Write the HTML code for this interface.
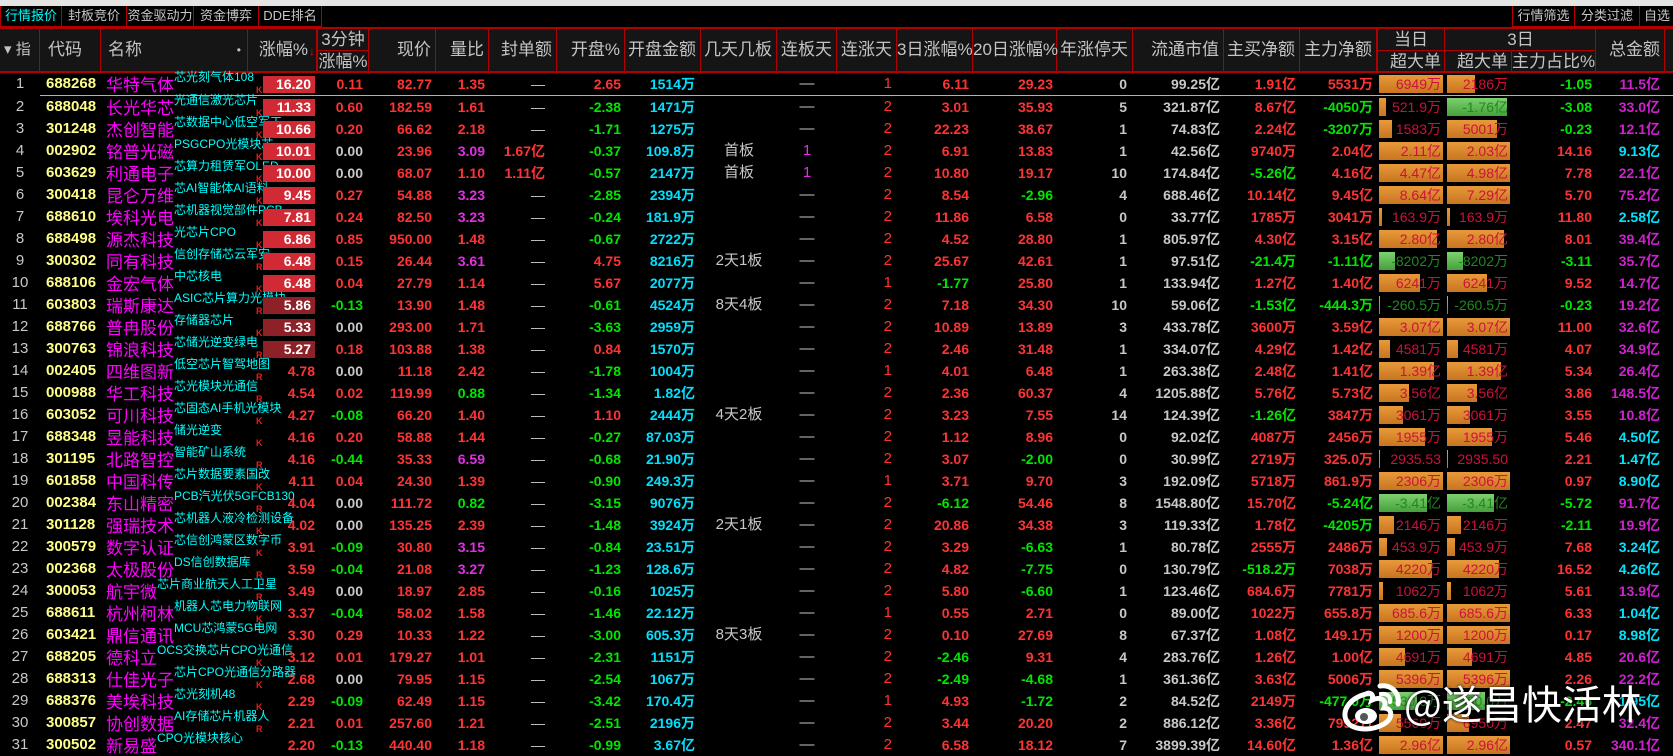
<!DOCTYPE html>
<html><head><meta charset="utf-8">
<style>
*{box-sizing:border-box}
body{margin:0;background:#000;width:1673px;height:744px;overflow:hidden;position:relative;font-family:"Liberation Sans","Noto Sans CJK SC",sans-serif}
.top{position:absolute;left:0;top:0;width:1673px;height:6px;background:#e4e4e4}
.tab{position:absolute;top:6px;height:21px;border:1px solid #b00000;border-top:none;color:#c8c8c8;font-size:13px;line-height:20px;text-align:center;background:#000;white-space:nowrap;overflow:hidden}
.hd{position:absolute;top:27px;left:0;width:1673px;height:46px;background:#151515;border-top:2px solid #b00000;border-bottom:2px solid #b00000}
.hc{position:absolute;top:0;height:42px;border-right:1px solid #b00000;color:#c4c4c4;font-size:17px;line-height:42px;text-align:right;padding-right:4px;white-space:nowrap}
.hs{position:absolute;height:21px;line-height:21px;color:#c4c4c4;font-size:17px;text-align:center;white-space:nowrap}
.hl{position:absolute;height:1px;background:#b00000}
.hv{position:absolute;width:1px;background:#b00000}
table{position:absolute;top:73px;left:0;border-collapse:collapse;table-layout:fixed;width:1673px}
td{height:22px;padding:0 4px 0 0;text-align:right;font-size:14px;font-weight:bold;white-space:nowrap;overflow:visible;color:#c8c8c8;position:relative;line-height:22px}
td:nth-child(1){text-align:center;padding:0;font-weight:normal;font-size:15px}
td:nth-child(2){text-align:left;padding-left:6px;color:#ffff88;font-size:15px}
td:nth-child(3){text-align:left;padding-left:5px;font-weight:normal}
td:nth-child(4){padding:0 2px 0 15px}
td:nth-child(5){padding-right:6px}
td:nth-child(8){padding-right:12px;font-weight:normal}
td:nth-child(10){padding-right:6px;color:#00e0ff}
td:nth-child(11),td:nth-child(12){text-align:center;padding:0;font-weight:normal;font-size:15px}
td:nth-child(13){padding-right:5px;color:#ff3333;font-weight:normal;font-size:15px}
td:nth-child(16){padding-right:6px}
td:nth-child(20),td:nth-child(21){padding:0 2px;font-weight:normal}
td:nth-child(23){padding-right:5px}
.n{color:#ff00ff;font-size:17px;position:relative;top:2px}
.cp{color:#00ffff;font-size:12px;position:absolute;top:-3px;line-height:14px;font-weight:normal}
.k{position:absolute;left:8px;bottom:0;font-size:9px;color:#e02020;font-style:normal;line-height:10px;font-weight:bold}
.zf{background:#d22a34;color:#fff;height:17px;line-height:17px;margin-top:0;padding-right:4px}
.zd{background:#8e2028}
.r{color:#ff3333}.g{color:#00e600}.w{color:#c8c8c8}.c{color:#00e5ff}.m{color:#d020d0}.p{color:#e030e0}
.bw{position:relative;height:18px;line-height:18px;color:#d0103c;font-size:14px;padding-right:2px}
.bw b{position:absolute;left:0;top:0;height:18px;background:linear-gradient(#e89a3a,#c87520);font-weight:normal}
.bw b.gb{background:linear-gradient(#7ed070,#45a03a)}
.bw span{position:relative}
.bw.gt{color:#1e8a1e}
.y td{border-bottom:1px solid #c8c800}
.y td:first-child{border-bottom:none}
.wm{position:absolute;left:1404px;top:676px;color:#fff;font-size:40px;font-family:"Noto Sans CJK SC",sans-serif;line-height:52px;text-shadow:0 0 3px #000}
</style></head><body>
<div class="top"></div>
<div class="tab" style="left:0;width:62px;color:#00ffff">行情报价</div>
<div class="tab" style="left:61px;width:66px">封板竞价</div>
<div class="tab" style="left:126px;width:68px">资金驱动力</div>
<div class="tab" style="left:193px;width:66px">资金博弈</div>
<div class="tab" style="left:258px;width:64px">DDE排名</div>
<div class="tab" style="left:1512px;width:63px">行情筛选</div>
<div class="tab" style="left:1574px;width:66px">分类过滤</div>
<div class="tab" style="left:1639px;width:40px;text-align:left;padding-left:4px">自选</div>
<div class="hd">
<div class="hc" style="left:0;width:40px;text-align:left;padding-left:4px;font-size:15px">▾ 指</div>
<div class="hc" style="left:40px;width:61px;text-align:left;padding-left:8px">代码</div>
<div class="hc" style="left:101px;width:147px;text-align:left;padding-left:7px">名称<span style="position:absolute;right:6px;font-size:12px">•</span></div>
<div class="hc" style="left:248px;width:69px;padding-right:8px">涨幅%<span style="position:absolute;right:1px;top:1px;color:#f00;font-size:12px">↓</span></div>
<div class="hs" style="left:317px;top:0;width:52px">3分钟</div>
<div class="hl" style="left:317px;top:21px;width:52px"></div>
<div class="hs" style="left:317px;top:22px;width:52px">涨幅%</div>
<div class="hv" style="left:317px;top:0;height:42px"></div>
<div class="hv" style="left:368px;top:0;height:42px"></div>
<div class="hc" style="left:369px;width:67px">现价</div>
<div class="hc" style="left:436px;width:53px">量比</div>
<div class="hc" style="left:489px;width:68px">封单额</div>
<div class="hc" style="left:557px;width:68px">开盘%</div>
<div class="hc" style="left:625px;width:76px">开盘金额</div>
<div class="hc" style="left:701px;width:76px">几天几板</div>
<div class="hc" style="left:777px;width:60px">连板天</div>
<div class="hc" style="left:837px;width:60px">连涨天</div>
<div class="hc" style="left:897px;width:76px">3日涨幅%</div>
<div class="hc" style="left:973px;width:84px">20日涨幅%</div>
<div class="hc" style="left:1057px;width:76px">年涨停天</div>
<div class="hc" style="left:1133px;width:91px">流通市值</div>
<div class="hc" style="left:1224px;width:76px">主买净额</div>
<div class="hc" style="left:1300px;width:77px">主力净额</div>
<div class="hs" style="left:1377px;top:0;width:68px">当日</div>
<div class="hs" style="left:1377px;top:22px;width:68px;text-align:right;padding-right:4px">超大单</div>
<div class="hs" style="left:1445px;top:0;width:151px">3日</div>
<div class="hs" style="left:1445px;top:22px;width:67px;text-align:right;padding-right:4px">超大单</div>
<div class="hs" style="left:1512px;top:22px;width:84px;text-align:right;padding-right:4px">主力占比%</div>
<div class="hl" style="left:1377px;top:21px;width:219px"></div>
<div class="hv" style="left:1377px;top:0;height:42px"></div>
<div class="hv" style="left:1444px;top:0;height:42px"></div>
<div class="hv" style="left:1511px;top:22px;height:20px"></div>
<div class="hv" style="left:1595px;top:0;height:42px"></div>
<div class="hc" style="left:1596px;width:69px">总金额</div>
</div>
<table>
<colgroup><col style="width:40px"><col style="width:61px"><col style="width:147px"><col style="width:69px"><col style="width:52px"><col style="width:67px"><col style="width:53px"><col style="width:68px"><col style="width:68px"><col style="width:76px"><col style="width:76px"><col style="width:60px"><col style="width:60px"><col style="width:76px"><col style="width:84px"><col style="width:76px"><col style="width:91px"><col style="width:76px"><col style="width:77px"><col style="width:68px"><col style="width:67px"><col style="width:84px"><col style="width:69px"><col style="width:8px"></colgroup>
<tr class="y"><td>1</td><td>688268</td><td><span class="n">华特气体</span><span class="cp">芯光刻气体108</span></td><td><i class="k">K</i><div class="zf">16.20</div></td><td class="r">0.11</td><td class="r">82.77</td><td class="r">1.35</td><td>—</td><td class="r">2.65</td><td>1514万</td><td></td><td>—</td><td>1</td><td class="r">6.11</td><td class="r">29.23</td><td>0</td><td>99.25亿</td><td class="r">1.91亿</td><td class="r">5531万</td><td><div class="bw"><b style="width:100%"></b><span>6949万</span></div></td><td><div class="bw"><b style="width:45%"></b><span>2186万</span></div></td><td class="g">-1.05</td><td class="m">11.5亿</td><td></td></tr>
<tr><td>2</td><td>688048</td><td><span class="n">长光华芯</span><span class="cp">光通信激光芯片</span></td><td><i class="k">K</i><div class="zf">11.33</div></td><td class="r">0.60</td><td class="r">182.59</td><td class="r">1.61</td><td>—</td><td class="g">-2.38</td><td>1471万</td><td></td><td>—</td><td>2</td><td class="r">3.01</td><td class="r">35.93</td><td>5</td><td>321.87亿</td><td class="r">8.67亿</td><td class="g">-4050万</td><td><div class="bw"><b style="width:11%"></b><span>521.9万</span></div></td><td><div class="bw gt"><b class="gb" style="width:95%"></b><span>-1.76亿</span></div></td><td class="g">-3.08</td><td class="m">33.0亿</td><td></td></tr>
<tr><td>3</td><td>301248</td><td><span class="n">杰创智能</span><span class="cp">芯数据中心低空军工</span></td><td><i class="k">K</i><div class="zf">10.66</div></td><td class="r">0.20</td><td class="r">66.62</td><td class="r">2.18</td><td>—</td><td class="g">-1.71</td><td>1275万</td><td></td><td>—</td><td>2</td><td class="r">22.23</td><td class="r">38.67</td><td>1</td><td>74.83亿</td><td class="r">2.24亿</td><td class="g">-3207万</td><td><div class="bw"><b style="width:20%"></b><span>1583万</span></div></td><td><div class="bw"><b style="width:80%"></b><span>5001万</span></div></td><td class="g">-0.23</td><td class="m">12.1亿</td><td></td></tr>
<tr><td>4</td><td>002902</td><td><span class="n">铭普光磁</span><span class="cp">PSGCPO光模块芯</span></td><td><i class="k">K</i><div class="zf">10.01</div></td><td class="w">0.00</td><td class="r">23.96</td><td class="p">3.09</td><td class="r" style="font-weight:bold">1.67亿</td><td class="g">-0.37</td><td>109.8万</td><td>首板</td><td class="p">1</td><td>2</td><td class="r">6.91</td><td class="r">13.83</td><td>1</td><td>42.56亿</td><td class="r">9740万</td><td class="r">2.04亿</td><td><div class="bw"><b style="width:100%"></b><span>2.11亿</span></div></td><td><div class="bw"><b style="width:100%"></b><span>2.03亿</span></div></td><td class="r">14.16</td><td class="c">9.13亿</td><td></td></tr>
<tr><td>5</td><td>603629</td><td><span class="n">利通电子</span><span class="cp">芯算力租赁军OLED</span></td><td><i class="k">K</i><div class="zf">10.00</div></td><td class="w">0.00</td><td class="r">68.07</td><td class="r">1.10</td><td class="r" style="font-weight:bold">1.11亿</td><td class="g">-0.57</td><td>2147万</td><td>首板</td><td class="p">1</td><td>2</td><td class="r">10.80</td><td class="r">19.17</td><td>10</td><td>174.84亿</td><td class="g">-5.26亿</td><td class="r">4.16亿</td><td><div class="bw"><b style="width:100%"></b><span>4.47亿</span></div></td><td><div class="bw"><b style="width:100%"></b><span>4.98亿</span></div></td><td class="r">7.78</td><td class="m">22.1亿</td><td></td></tr>
<tr><td>6</td><td>300418</td><td><span class="n">昆仑万维</span><span class="cp">芯AI智能体AI语料</span></td><td><i class="k">K</i><div class="zf">9.45</div></td><td class="r">0.27</td><td class="r">54.88</td><td class="p">3.23</td><td>—</td><td class="g">-2.85</td><td>2394万</td><td></td><td>—</td><td>2</td><td class="r">8.54</td><td class="g">-2.96</td><td>4</td><td>688.46亿</td><td class="r">10.14亿</td><td class="r">9.45亿</td><td><div class="bw"><b style="width:100%"></b><span>8.64亿</span></div></td><td><div class="bw"><b style="width:100%"></b><span>7.29亿</span></div></td><td class="r">5.70</td><td class="m">75.2亿</td><td></td></tr>
<tr><td>7</td><td>688610</td><td><span class="n">埃科光电</span><span class="cp">芯机器视觉部件PCB</span></td><td><i class="k">K</i><div class="zf">7.81</div></td><td class="r">0.24</td><td class="r">82.50</td><td class="p">3.23</td><td>—</td><td class="g">-0.24</td><td>181.9万</td><td></td><td>—</td><td>2</td><td class="r">11.86</td><td class="r">6.58</td><td>0</td><td>33.77亿</td><td class="r">1785万</td><td class="r">3041万</td><td><div class="bw"><b style="width:4%"></b><span>163.9万</span></div></td><td><div class="bw"><b style="width:4%"></b><span>163.9万</span></div></td><td class="r">11.80</td><td class="c">2.58亿</td><td></td></tr>
<tr><td>8</td><td>688498</td><td><span class="n">源杰科技</span><span class="cp">光芯片CPO</span></td><td><i class="k">K</i><div class="zf">6.86</div></td><td class="r">0.85</td><td class="r">950.00</td><td class="r">1.48</td><td>—</td><td class="g">-0.67</td><td>2722万</td><td></td><td>—</td><td>2</td><td class="r">4.52</td><td class="r">28.80</td><td>1</td><td>805.97亿</td><td class="r">4.30亿</td><td class="r">3.15亿</td><td><div class="bw"><b style="width:90%"></b><span>2.80亿</span></div></td><td><div class="bw"><b style="width:90%"></b><span>2.80亿</span></div></td><td class="r">8.01</td><td class="m">39.4亿</td><td></td></tr>
<tr><td>9</td><td>300302</td><td><span class="n">同有科技</span><span class="cp">信创存储芯云军安</span></td><td><i class="k">R</i><div class="zf">6.48</div></td><td class="r">0.15</td><td class="r">26.44</td><td class="p">3.61</td><td>—</td><td class="r">4.75</td><td>8216万</td><td>2天1板</td><td>—</td><td>2</td><td class="r">25.67</td><td class="r">42.61</td><td>1</td><td>97.51亿</td><td class="g">-21.4万</td><td class="g">-1.11亿</td><td><div class="bw gt"><b class="gb" style="width:25%"></b><span>-8202万</span></div></td><td><div class="bw gt"><b class="gb" style="width:25%"></b><span>-8202万</span></div></td><td class="g">-3.11</td><td class="m">35.7亿</td><td></td></tr>
<tr><td>10</td><td>688106</td><td><span class="n">金宏气体</span><span class="cp">中芯核电</span></td><td><i class="k">K</i><div class="zf">6.48</div></td><td class="r">0.04</td><td class="r">27.79</td><td class="r">1.14</td><td>—</td><td class="r">5.67</td><td>2077万</td><td></td><td>—</td><td>1</td><td class="g">-1.77</td><td class="r">25.80</td><td>1</td><td>133.94亿</td><td class="r">1.27亿</td><td class="r">1.40亿</td><td><div class="bw"><b style="width:64%"></b><span>6241万</span></div></td><td><div class="bw"><b style="width:64%"></b><span>6241万</span></div></td><td class="r">9.52</td><td class="m">14.7亿</td><td></td></tr>
<tr><td>11</td><td>603803</td><td><span class="n">瑞斯康达</span><span class="cp">ASIC芯片算力光模块</span></td><td><i class="k">R</i><div class="zf zd">5.86</div></td><td class="g">-0.13</td><td class="r">13.90</td><td class="r">1.48</td><td>—</td><td class="g">-0.61</td><td>4524万</td><td>8天4板</td><td>—</td><td>2</td><td class="r">7.18</td><td class="r">34.30</td><td>10</td><td>59.06亿</td><td class="g">-1.53亿</td><td class="g">-444.3万</td><td><div class="bw gt"><b class="gb" style="width:2%"></b><span>-260.5万</span></div></td><td><div class="bw gt"><b class="gb" style="width:2%"></b><span>-260.5万</span></div></td><td class="g">-0.23</td><td class="m">19.2亿</td><td></td></tr>
<tr><td>12</td><td>688766</td><td><span class="n">普冉股份</span><span class="cp">存储器芯片</span></td><td><i class="k">K</i><div class="zf zd">5.33</div></td><td class="w">0.00</td><td class="r">293.00</td><td class="r">1.71</td><td>—</td><td class="g">-3.63</td><td>2959万</td><td></td><td>—</td><td>2</td><td class="r">10.89</td><td class="r">13.89</td><td>3</td><td>433.78亿</td><td class="r">3600万</td><td class="r">3.59亿</td><td><div class="bw"><b style="width:100%"></b><span>3.07亿</span></div></td><td><div class="bw"><b style="width:100%"></b><span>3.07亿</span></div></td><td class="r">11.00</td><td class="m">32.6亿</td><td></td></tr>
<tr><td>13</td><td>300763</td><td><span class="n">锦浪科技</span><span class="cp">芯储光逆变绿电</span></td><td><i class="k">R</i><div class="zf zd">5.27</div></td><td class="r">0.18</td><td class="r">103.88</td><td class="r">1.38</td><td>—</td><td class="r">0.84</td><td>1570万</td><td></td><td>—</td><td>2</td><td class="r">2.46</td><td class="r">31.48</td><td>1</td><td>334.07亿</td><td class="r">4.29亿</td><td class="r">1.42亿</td><td><div class="bw"><b style="width:17%"></b><span>4581万</span></div></td><td><div class="bw"><b style="width:17%"></b><span>4581万</span></div></td><td class="r">4.07</td><td class="m">34.9亿</td><td></td></tr>
<tr><td>14</td><td>002405</td><td><span class="n">四维图新</span><span class="cp">低空芯片智驾地图</span></td><td class="r"><i class="k">R</i>4.78</td><td class="w">0.00</td><td class="r">11.18</td><td class="r">2.42</td><td>—</td><td class="g">-1.78</td><td>1004万</td><td></td><td>—</td><td>1</td><td class="r">4.01</td><td class="r">6.48</td><td>1</td><td>263.38亿</td><td class="r">2.48亿</td><td class="r">1.41亿</td><td><div class="bw"><b style="width:86%"></b><span>1.39亿</span></div></td><td><div class="bw"><b style="width:86%"></b><span>1.39亿</span></div></td><td class="r">5.34</td><td class="m">26.4亿</td><td></td></tr>
<tr><td>15</td><td>000988</td><td><span class="n">华工科技</span><span class="cp">芯光模块光通信</span></td><td class="r"><i class="k">R</i>4.54</td><td class="r">0.02</td><td class="r">119.99</td><td class="g">0.88</td><td>—</td><td class="g">-1.34</td><td>1.82亿</td><td></td><td>—</td><td>2</td><td class="r">2.36</td><td class="r">60.37</td><td>4</td><td>1205.88亿</td><td class="r">5.76亿</td><td class="r">5.73亿</td><td><div class="bw"><b style="width:47%"></b><span>3.56亿</span></div></td><td><div class="bw"><b style="width:47%"></b><span>3.56亿</span></div></td><td class="r">3.86</td><td class="m">148.5亿</td><td></td></tr>
<tr><td>16</td><td>603052</td><td><span class="n">可川科技</span><span class="cp">芯固态AI手机光模块</span></td><td class="r"><i class="k">K</i>4.27</td><td class="g">-0.08</td><td class="r">66.20</td><td class="r">1.40</td><td>—</td><td class="r">1.10</td><td>2444万</td><td>4天2板</td><td>—</td><td>2</td><td class="r">3.23</td><td class="r">7.55</td><td>14</td><td>124.39亿</td><td class="g">-1.26亿</td><td class="r">3847万</td><td><div class="bw"><b style="width:37%"></b><span>3061万</span></div></td><td><div class="bw"><b style="width:37%"></b><span>3061万</span></div></td><td class="r">3.55</td><td class="m">10.8亿</td><td></td></tr>
<tr><td>17</td><td>688348</td><td><span class="n">昱能科技</span><span class="cp">储光逆变</span></td><td class="r"><i class="k">K</i>4.16</td><td class="r">0.20</td><td class="r">58.88</td><td class="r">1.44</td><td>—</td><td class="g">-0.27</td><td>87.03万</td><td></td><td>—</td><td>2</td><td class="r">1.12</td><td class="r">8.96</td><td>0</td><td>92.02亿</td><td class="r">4087万</td><td class="r">2456万</td><td><div class="bw"><b style="width:72%"></b><span>1955万</span></div></td><td><div class="bw"><b style="width:72%"></b><span>1955万</span></div></td><td class="r">5.46</td><td class="c">4.50亿</td><td></td></tr>
<tr><td>18</td><td>301195</td><td><span class="n">北路智控</span><span class="cp">智能矿山系统</span></td><td class="r"><i class="k">R</i>4.16</td><td class="g">-0.44</td><td class="r">35.33</td><td class="p">6.59</td><td>—</td><td class="g">-0.68</td><td>21.90万</td><td></td><td>—</td><td>2</td><td class="r">3.07</td><td class="g">-2.00</td><td>0</td><td>30.99亿</td><td class="r">2719万</td><td class="r">325.0万</td><td><div class="bw"><b style="width:2%"></b><span>2935.53</span></div></td><td><div class="bw"><b style="width:2%"></b><span>2935.50</span></div></td><td class="r">2.21</td><td class="c">1.47亿</td><td></td></tr>
<tr><td>19</td><td>601858</td><td><span class="n">中国科传</span><span class="cp">芯片数据要素国改</span></td><td class="r"><i class="k">K</i>4.11</td><td class="r">0.04</td><td class="r">24.30</td><td class="r">1.39</td><td>—</td><td class="g">-0.90</td><td>249.3万</td><td></td><td>—</td><td>1</td><td class="r">3.71</td><td class="r">9.70</td><td>3</td><td>192.09亿</td><td class="r">5718万</td><td class="r">861.9万</td><td><div class="bw"><b style="width:100%"></b><span>2306万</span></div></td><td><div class="bw"><b style="width:100%"></b><span>2306万</span></div></td><td class="r">0.97</td><td class="c">8.90亿</td><td></td></tr>
<tr><td>20</td><td>002384</td><td><span class="n">东山精密</span><span class="cp">PCB汽光伏5GFCB130</span></td><td class="r"><i class="k">R</i>4.04</td><td class="w">0.00</td><td class="r">111.72</td><td class="g">0.82</td><td>—</td><td class="g">-3.15</td><td>9076万</td><td></td><td>—</td><td>2</td><td class="g">-6.12</td><td class="r">54.46</td><td>8</td><td>1548.80亿</td><td class="r">15.70亿</td><td class="g">-5.24亿</td><td><div class="bw gt"><b class="gb" style="width:75%"></b><span>-3.41亿</span></div></td><td><div class="bw gt"><b class="gb" style="width:75%"></b><span>-3.41亿</span></div></td><td class="g">-5.72</td><td class="m">91.7亿</td><td></td></tr>
<tr><td>21</td><td>301128</td><td><span class="n">强瑞技术</span><span class="cp">芯机器人液冷检测设备</span></td><td class="r"><i class="k">K</i>4.02</td><td class="w">0.00</td><td class="r">135.25</td><td class="r">2.39</td><td>—</td><td class="g">-1.48</td><td>3924万</td><td>2天1板</td><td>—</td><td>2</td><td class="r">20.86</td><td class="r">34.38</td><td>3</td><td>119.33亿</td><td class="r">1.78亿</td><td class="g">-4205万</td><td><div class="bw"><b style="width:23%"></b><span>2146万</span></div></td><td><div class="bw"><b style="width:23%"></b><span>2146万</span></div></td><td class="g">-2.11</td><td class="m">19.9亿</td><td></td></tr>
<tr><td>22</td><td>300579</td><td><span class="n">数字认证</span><span class="cp">芯信创鸿蒙区数字币</span></td><td class="r"><i class="k">K</i>3.91</td><td class="g">-0.09</td><td class="r">30.80</td><td class="p">3.15</td><td>—</td><td class="g">-0.84</td><td>23.51万</td><td></td><td>—</td><td>2</td><td class="r">3.29</td><td class="g">-6.63</td><td>1</td><td>80.78亿</td><td class="r">2555万</td><td class="r">2486万</td><td><div class="bw"><b style="width:12%"></b><span>453.9万</span></div></td><td><div class="bw"><b style="width:12%"></b><span>453.9万</span></div></td><td class="r">7.68</td><td class="c">3.24亿</td><td></td></tr>
<tr><td>23</td><td>002368</td><td><span class="n">太极股份</span><span class="cp">DS信创数据库</span></td><td class="r"><i class="k">R</i>3.59</td><td class="g">-0.04</td><td class="r">21.08</td><td class="p">3.27</td><td>—</td><td class="g">-1.23</td><td>128.6万</td><td></td><td>—</td><td>2</td><td class="r">4.82</td><td class="g">-7.75</td><td>0</td><td>130.79亿</td><td class="g">-518.2万</td><td class="r">7038万</td><td><div class="bw"><b style="width:83%"></b><span>4220万</span></div></td><td><div class="bw"><b style="width:83%"></b><span>4220万</span></div></td><td class="r">16.52</td><td class="c">4.26亿</td><td></td></tr>
<tr><td>24</td><td>300053</td><td><span class="n">航宇微</span><span class="cp">芯片商业航天人工卫星</span></td><td class="r"><i class="k">R</i>3.49</td><td class="w">0.00</td><td class="r">18.97</td><td class="r">2.85</td><td>—</td><td class="g">-0.16</td><td>1025万</td><td></td><td>—</td><td>2</td><td class="r">5.80</td><td class="g">-6.60</td><td>1</td><td>123.46亿</td><td class="r">684.6万</td><td class="r">7781万</td><td><div class="bw"><b style="width:7%"></b><span>1062万</span></div></td><td><div class="bw"><b style="width:7%"></b><span>1062万</span></div></td><td class="r">5.61</td><td class="m">13.9亿</td><td></td></tr>
<tr><td>25</td><td>688611</td><td><span class="n">杭州柯林</span><span class="cp">机器人芯电力物联网</span></td><td class="r"><i class="k">K</i>3.37</td><td class="g">-0.04</td><td class="r">58.02</td><td class="r">1.58</td><td>—</td><td class="g">-1.46</td><td>22.12万</td><td></td><td>—</td><td>1</td><td class="r">0.55</td><td class="r">2.71</td><td>0</td><td>89.00亿</td><td class="r">1022万</td><td class="r">655.8万</td><td><div class="bw"><b style="width:100%"></b><span>685.6万</span></div></td><td><div class="bw"><b style="width:100%"></b><span>685.6万</span></div></td><td class="r">6.33</td><td class="c">1.04亿</td><td></td></tr>
<tr><td>26</td><td>603421</td><td><span class="n">鼎信通讯</span><span class="cp">MCU芯鸿蒙5G电网</span></td><td class="r">3.30</td><td class="r">0.29</td><td class="r">10.33</td><td class="r">1.22</td><td>—</td><td class="g">-3.00</td><td>605.3万</td><td>8天3板</td><td>—</td><td>2</td><td class="r">0.10</td><td class="r">27.69</td><td>8</td><td>67.37亿</td><td class="r">1.08亿</td><td class="r">149.1万</td><td><div class="bw"><b style="width:100%"></b><span>1200万</span></div></td><td><div class="bw"><b style="width:100%"></b><span>1200万</span></div></td><td class="r">0.17</td><td class="c">8.98亿</td><td></td></tr>
<tr><td>27</td><td>688205</td><td><span class="n">德科立</span><span class="cp">OCS交换芯片CPO光通信</span></td><td class="r"><i class="k">K</i>3.12</td><td class="r">0.01</td><td class="r">179.27</td><td class="r">1.01</td><td>—</td><td class="g">-2.31</td><td>1151万</td><td></td><td>—</td><td>2</td><td class="g">-2.46</td><td class="r">9.31</td><td>4</td><td>283.76亿</td><td class="r">1.26亿</td><td class="r">1.00亿</td><td><div class="bw"><b style="width:40%"></b><span>4691万</span></div></td><td><div class="bw"><b style="width:40%"></b><span>4691万</span></div></td><td class="r">4.85</td><td class="m">20.6亿</td><td></td></tr>
<tr><td>28</td><td>688313</td><td><span class="n">仕佳光子</span><span class="cp">芯片CPO光通信分路器</span></td><td class="r"><i class="k">K</i>2.68</td><td class="w">0.00</td><td class="r">79.95</td><td class="r">1.15</td><td>—</td><td class="g">-2.54</td><td>1067万</td><td></td><td>—</td><td>2</td><td class="g">-2.49</td><td class="g">-4.68</td><td>1</td><td>361.36亿</td><td class="r">3.63亿</td><td class="r">5006万</td><td><div class="bw"><b style="width:100%"></b><span>5396万</span></div></td><td><div class="bw"><b style="width:100%"></b><span>5396万</span></div></td><td class="r">2.26</td><td class="m">22.2亿</td><td></td></tr>
<tr><td>29</td><td>688376</td><td><span class="n">美埃科技</span><span class="cp">芯光刻机48</span></td><td class="r"><i class="k">K</i>2.29</td><td class="g">-0.09</td><td class="r">62.49</td><td class="r">1.15</td><td>—</td><td class="g">-3.42</td><td>170.4万</td><td></td><td>—</td><td>1</td><td class="r">4.93</td><td class="g">-1.72</td><td>2</td><td>84.52亿</td><td class="r">2149万</td><td class="g">-477.0万</td><td><div class="bw gt"><b class="gb" style="width:60%"></b><span>-530.0万</span></div></td><td><div class="bw gt"><b class="gb" style="width:60%"></b><span>-530.0万</span></div></td><td class="g">-2.46</td><td class="c">1.95亿</td><td></td></tr>
<tr><td>30</td><td>300857</td><td><span class="n">协创数据</span><span class="cp">AI存储芯片机器人</span></td><td class="r"><i class="k">R</i>2.21</td><td class="r">0.01</td><td class="r">257.60</td><td class="r">1.21</td><td>—</td><td class="g">-2.51</td><td>2196万</td><td></td><td>—</td><td>2</td><td class="r">3.44</td><td class="r">20.20</td><td>2</td><td>886.12亿</td><td class="r">3.36亿</td><td class="r">7992万</td><td><div class="bw"><b style="width:35%"></b><span>5560万</span></div></td><td><div class="bw"><b style="width:35%"></b><span>6950万</span></div></td><td class="r">2.47</td><td class="m">32.4亿</td><td></td></tr>
<tr><td>31</td><td>300502</td><td><span class="n">新易盛</span><span class="cp">CPO光模块核心</span></td><td class="r">2.20</td><td class="g">-0.13</td><td class="r">440.40</td><td class="r">1.18</td><td>—</td><td class="g">-0.99</td><td>3.67亿</td><td></td><td>—</td><td>2</td><td class="r">6.58</td><td class="r">18.12</td><td>7</td><td>3899.39亿</td><td class="r">14.60亿</td><td class="r">1.36亿</td><td><div class="bw"><b style="width:100%"></b><span>2.96亿</span></div></td><td><div class="bw"><b style="width:100%"></b><span>2.96亿</span></div></td><td class="r">0.57</td><td class="m">340.1亿</td><td></td></tr>
</table>
<svg style="position:absolute;left:1340px;top:680px" width="64" height="52" viewBox="0 0 64 52">
<path d="M26 14 C10 18 2 30 6 40 C10 50 30 52 44 44 C54 38 52 28 44 28 C48 20 40 16 32 20 C34 14 30 12 26 14 Z" fill="none" stroke="#fff" stroke-width="5"/>
<ellipse cx="26" cy="36" rx="11" ry="8" fill="#fff"/>
<circle cx="24" cy="37" r="4" fill="#555"/>
<path d="M40 6 C52 4 60 14 58 24" fill="none" stroke="#fff" stroke-width="5" stroke-linecap="round"/>
<path d="M41 14 C47 13 51 17 50 22" fill="none" stroke="#fff" stroke-width="4" stroke-linecap="round"/>
</svg>
<div class="wm">@遂昌快活林</div>
</body></html>
